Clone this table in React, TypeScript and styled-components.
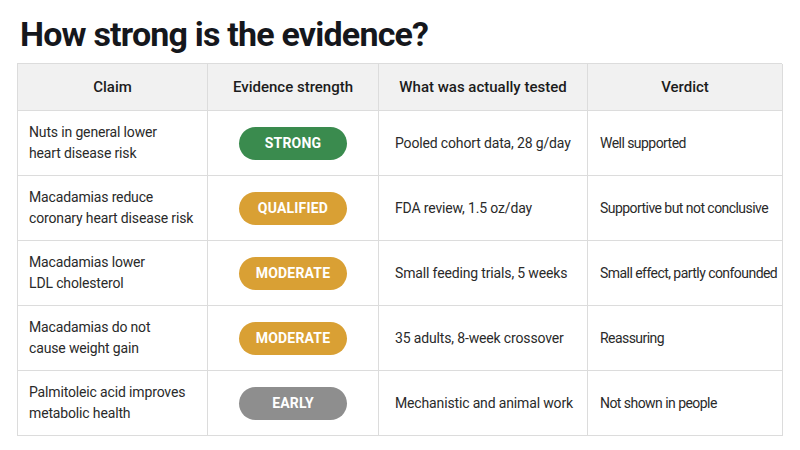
import React from "react";
import styled, { createGlobalStyle } from "styled-components";

const Global = createGlobalStyle`
  html, body { margin: 0; padding: 0; background: #ffffff; }
  body { font-family: "Roboto", "Noto Sans", sans-serif; color: #222; }
`;

const Page = styled.div`
  width: 800px;
  height: 450px;
  box-sizing: border-box;
  padding: 12px 18px 0 17px;
  display: flex;
  flex-direction: column;
`;

const Title = styled.h1`
  margin: 0 0 0 3px;
  font-family: "Roboto", sans-serif;
  font-weight: 700;
  font-size: 34px;
  line-height: 44px;
  color: #15171c;
  letter-spacing: -0.8px;
`;

const Table = styled.div`
  margin-top: 7px;
  display: grid;
  grid-template-columns: 190px 171px 209px 195px;
  border-top: 1px solid #dcdcdc;
  border-left: 1px solid #dcdcdc;
`;

const HeadCell = styled.div`
  height: 46px;
  background: #f1f1f1;
  border-right: 1px solid #dcdcdc;
  border-bottom: 1px solid #dcdcdc;
  display: flex;
  align-items: center;
  justify-content: center;
  font-size: 15px;
  font-weight: 500;
  color: #1c1c1c;
`;

const Cell = styled.div<{ $pad?: number; $center?: boolean; $tight?: boolean }>`
  height: 64px;
  border-right: 1px solid #dcdcdc;
  border-bottom: 1px solid #dcdcdc;
  display: flex;
  align-items: center;
  justify-content: ${(p) => (p.$center ? "center" : "flex-start")};
  padding-left: ${(p) => p.$pad ?? 0}px;
  font-size: 14px;
  line-height: 21px;
  letter-spacing: ${(p) => (p.$tight ? "-0.55px" : "-0.15px")};
  color: #2a2a2a;
  white-space: nowrap;
`;

const Pill = styled.span<{ $bg: string }>`
  width: 108px;
  height: 33px;
  border-radius: 17px;
  background: ${(p) => p.$bg};
  color: #ffffff;
  display: flex;
  align-items: center;
  justify-content: center;
  font-weight: 700;
  font-size: 14px;
  letter-spacing: 0.2px;
`;

const colors: Record<string, string> = {
  STRONG: "#3a8b4e",
  QUALIFIED: "#d9a034",
  MODERATE: "#d9a034",
  EARLY: "#8e8e8e",
};

const rows = [
  ["Nuts in general lower", "heart disease risk", "STRONG", "Pooled cohort data, 28 g/day", "Well supported"],
  ["Macadamias reduce", "coronary heart disease risk", "QUALIFIED", "FDA review, 1.5 oz/day", "Supportive but not conclusive"],
  ["Macadamias lower", "LDL cholesterol", "MODERATE", "Small feeding trials, 5 weeks", "Small effect, partly confounded"],
  ["Macadamias do not", "cause weight gain", "MODERATE", "35 adults, 8-week crossover", "Reassuring"],
  ["Palmitoleic acid improves", "metabolic health", "EARLY", "Mechanistic and animal work", "Not shown in people"],
];

export default function App() {
  return (
    <>
      <Global />
      <Page>
        <Title>How strong is the evidence?</Title>
        <Table>
          <HeadCell>Claim</HeadCell>
          <HeadCell>Evidence strength</HeadCell>
          <HeadCell>What was actually tested</HeadCell>
          <HeadCell>Verdict</HeadCell>
          {rows.map((r, i) => (
            <React.Fragment key={i}>
              <Cell $pad={11}>
                <span>
                  {r[0]}
                  <br />
                  {r[1]}
                </span>
              </Cell>
              <Cell $center>
                <Pill $bg={colors[r[2]]}>{r[2]}</Pill>
              </Cell>
              <Cell $pad={16}>{r[3]}</Cell>
              <Cell $pad={12} $tight>{r[4]}</Cell>
            </React.Fragment>
          ))}
        </Table>
      </Page>
    </>
  );
}
